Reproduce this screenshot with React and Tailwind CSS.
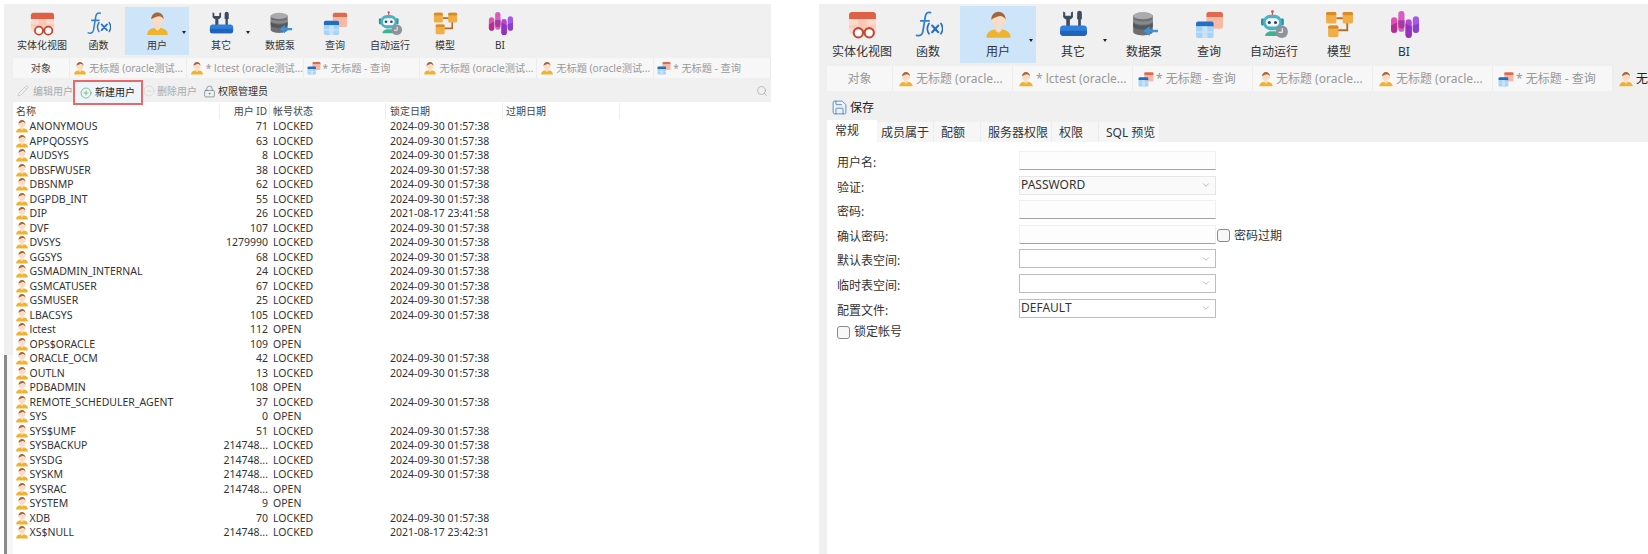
import React from "react";
import { ChevronDown, CircleMinus, CirclePlus, LockKeyhole, Pencil, Save, Search } from "lucide-react";

const UserIcon = ({ size = 24 }) => (
    <svg width={size} height={size} viewBox="0 0 24 24" className="shrink-0">
        <path d="M2 23c0-5 4-7 10-7s10 2 10 7z" fill="#efb32e" />
        <path d="M9.500 14h5v3l-2.500 2-2.500-2z" fill="#f9dcc6" />
        <circle cx="12" cy="8" r="6" fill="#f9dcc6" />
        <path d="M6 8c0-4 3-6.500 6-6.500S18 4 18 8c-1-2-3-3-4.500-3S9 6 6 8z" fill="#a5673a" />
    </svg>
);

const ViewIcon = ({ size }) => (
    <svg width={size} height={size} viewBox="0 0 28 28" className="shrink-0">
        <path d="M1 5a3 3 0 0 1 3-3h20a3 3 0 0 1 3 3v4H1z" fill="#dd6047" />
        <path d="M1 9h26v11a3 3 0 0 1-3 3H4a3 3 0 0 1-3-3z" fill="#fbd9cc" />
        <path d="M10 9h8v14h-8zM1 15h26v2H1z" fill="#f9c8b6" />
        <circle cx="10" cy="22" r="4.500" fill="#fff" stroke="#c9452f" strokeWidth="2" />
        <circle cx="20.500" cy="22" r="4.500" fill="#fff" stroke="#c9452f" strokeWidth="2" />
        <path d="M14 21h2.500" stroke="#c9452f" strokeWidth="2" />
    </svg>
);

const FuncIcon = ({ size }) => (
    <svg width={size} height={size} viewBox="0 0 28 28" className="shrink-0">
        <path d="M16 2.500c-3-.8-4.500.7-5 3.500L8.500 21c-.5 3-2.500 4.500-6 3.500M6.500 10.500h8" fill="none" stroke="#2f7fd3" strokeWidth="1.700" strokeLinecap="round" />
        <path d="M15.500 13c-2 3-2 7 0 10M27 13c2 3 2 7 0 10" transform="translate(-1 0)" fill="none" stroke="#2b6fc0" strokeWidth="1.600" strokeLinecap="round" />
        <path d="M17.500 15l6 6.500M23.500 15l-6 6.500" fill="none" stroke="#2b6fc0" strokeWidth="2" strokeLinecap="round" />
    </svg>
);

const OtherIcon = ({ size }) => (
    <svg width={size} height={size} viewBox="0 0 28 28" className="shrink-0">
        <path d="M7 6h3.500v10H7z" fill="#3f4c60" />
        <path d="M4 1.500v5.500l2 2h5.500l2-2V1.500l-2 1v3h-5.500v-3z" fill="#3f4c60" />
        <path d="M17.500 3a2.300 2.300 0 0 1 4.600 0v6h-1v7h-2.600V9h-1z" fill="#3f4c60" />
        <path d="M1 18c0-2 1.500-3 3-3h20c1.500 0 3 1 3 3v4c0 2-1.500 3-3 3H4c-1.500 0-3-1-3-3z" fill="#2f7fdc" />
        <path d="M1 20h26v2c0 2-1.500 3-3 3H4c-1.500 0-3-1-3-3z" fill="#1f63bb" />
    </svg>
);

const PumpIcon = ({ size }) => (
    <svg width={size} height={size} viewBox="0 0 28 28" className="shrink-0">
        <path d="M3 5h19v16c0 2-4 3.500-9.500 3.500S3 23 3 21z" fill="#6d6f73" />
        <path d="M3 12c1 2 5 3 9.500 3s8.500-1 9.500-3v4c-1 2-5 3-9.500 3S4 18 3 16z" fill="#55575b" />
        <ellipse cx="12.500" cy="5.500" rx="9.500" ry="3.500" fill="#a9abae" />
        <path d="M3 8c1 2 5 3 9.500 3s8.500-1 9.500-3v3c-1 2-5 3-9.500 3S4 13 3 11z" fill="#87898d" />
        <path d="M27 19v2.500h-8V25l-6-4.800 6-4.700V19z" fill="#3b92dd" />
    </svg>
);

const QueryIcon = ({ size }) => (
    <svg width={size} height={size} viewBox="0 0 28 28" className="shrink-0">
        <path d="M11 4a2 2 0 0 1 2-2h12a2 2 0 0 1 2 2v3H11z" fill="#df6a4f" />
        <path d="M11 7h16v9a2 2 0 0 1-2 2H11z" fill="#f7b9a4" />
        <path d="M1 13a2 2 0 0 1 2-2h13a2 2 0 0 1 2 2v3H1z" fill="#1f6fc9" />
        <path d="M1 16h17v9a2 2 0 0 1-2 2H3a2 2 0 0 1-2-2z" fill="#a6d3f7" />
        <path d="M7 16h5v11H7zM1 20.500h17v1.500H1z" fill="#c6e3fb" />
    </svg>
);

const RobotIcon = ({ size }) => (
    <svg width={size} height={size} viewBox="0 0 28 28" className="shrink-0">
        <path d="M12 1v4" stroke="#d0504a" strokeWidth="1.200" />
        <circle cx="12" cy="1.500" r="1.300" fill="#d0504a" />
        <rect x="1" y="8" width="3" height="7" rx="1.500" fill="#2f8f9f" />
        <rect x="20" y="8" width="3" height="7" rx="1.500" fill="#2f8f9f" />
        <rect x="3" y="4.500" width="18" height="15" rx="7" fill="#4db3c4" />
        <rect x="5.500" y="8" width="13" height="8" rx="4" fill="#f4f8fb" />
        <circle cx="9" cy="12" r="1.500" fill="#27456b" />
        <circle cx="15" cy="12" r="1.500" fill="#27456b" />
        <path d="M5 25c0-3 3-4.500 7-4.500s7 1.500 7 4.500z" fill="#3fb38f" />
        <circle cx="21" cy="21" r="6" fill="#8d949c" />
        <path d="M21.500 17.500V21.500H18" fill="none" stroke="#fff" strokeWidth="1" />
    </svg>
);

const ModelIcon = ({ size }) => (
    <svg width={size} height={size} viewBox="0 0 28 28" className="shrink-0">
        <path d="M11 8h8M21.500 12v7.500H11" fill="none" stroke="#b06f2c" strokeWidth="1.800" />
        <rect x="1" y="2" width="10" height="11" rx="1.500" fill="#f2ae46" />
        <rect x="1" y="2" width="10" height="3" rx="1.500" fill="#d98a2b" />
        <rect x="17" y="2" width="10" height="11" rx="1.500" fill="#f2ae46" />
        <rect x="17" y="2" width="10" height="3" rx="1.500" fill="#d98a2b" />
        <rect x="3" y="15" width="10" height="11" rx="1.500" fill="#f2ae46" />
        <rect x="3" y="15" width="10" height="3" rx="1.500" fill="#d98a2b" />
    </svg>
);

const BiIcon = ({ size }) => (
    <svg width={size} height={size} viewBox="0 0 28 28" className="shrink-0">
        <rect x="1" y="7" width="6" height="15" rx="3" fill="#e04fb3" />
        <path d="M1 15l6-3v7a3 3 0 0 1-6 0z" fill="#b02f8f" />
        <rect x="8" y="1" width="6" height="20" rx="3" fill="#d95cc0" />
        <path d="M8 10h6v5a3 3 0 0 1-6 0z" fill="#a83a9e" />
        <rect x="15" y="9" width="6" height="18" rx="3" fill="#b347d1" />
        <path d="M15 13l6 3v8a3 3 0 0 1-6 0z" fill="#9431c0" />
        <rect x="22" y="6" width="6" height="16" rx="3" fill="#a45ae6" />
        <path d="M22 15l6-2v6a3 3 0 0 1-6 0z" fill="#8a3fd0" />
    </svg>
);

const leftTools = [
    { label: "实体化视图", Icon: ViewIcon, w: "w-[60px]" },
    { label: "函数", Icon: FuncIcon, w: "w-[53px]" },
    { label: "用户", Icon: UserIcon, w: "w-[64px]", active: true, arrow: true },
    { label: "其它", Icon: OtherIcon, w: "w-[64px]", arrow: true },
    { label: "数据泵", Icon: PumpIcon, w: "w-[54px]" },
    { label: "查询", Icon: QueryIcon, w: "w-[56px]" },
    { label: "自动运行", Icon: RobotIcon, w: "w-[54px]" },
    { label: "模型", Icon: ModelIcon, w: "w-[56px]" },
    { label: "BI", Icon: BiIcon, w: "w-[54px]" },
];

const rightTools = [
    { label: "实体化视图", Icon: ViewIcon, w: "w-[68px]" },
    { label: "函数", Icon: FuncIcon, w: "w-[64px]" },
    { label: "用户", Icon: UserIcon, w: "w-[76px]", active: true, arrow: true },
    { label: "其它", Icon: OtherIcon, w: "w-[74px]", arrow: true },
    { label: "数据泵", Icon: PumpIcon, w: "w-[68px]" },
    { label: "查询", Icon: QueryIcon, w: "w-[62px]" },
    { label: "自动运行", Icon: RobotIcon, w: "w-[68px]" },
    { label: "模型", Icon: ModelIcon, w: "w-[62px]" },
    { label: "BI", Icon: BiIcon, w: "w-[68px]" },
];

const ToolItem = ({ tool, big }) => {
    const { label, Icon, w, active, arrow } = tool;
    return (
        <div className={`relative flex flex-col items-center shrink-0 ${w} ${big ? "h-[57px] pt-[4px]" : "h-[48px] pt-[4px]"} ${active ? "bg-[#cde4f9]" : ""}`}>
            <Icon size={big ? 29 : 25} />
            <span className={big ? "mt-[5px] text-[12px] leading-[16px] text-[#333]" : "mt-[1.500px] text-[10px] leading-[15px] text-[#333]"}>{label}</span>
            {/* little dropdown arrow next to the icon */}
            {arrow && (
                <span className={`absolute border-x-[2px] border-t-[3px] border-x-transparent border-t-[#222] ${big ? "right-[3px] top-[33px]" : "right-[3px] top-[24px]"}`} />
            )}
        </div>
    );
};

const users = [
    ["ANONYMOUS", "71", "LOCKED", "2024-09-30 01:57:38"],
    ["APPQOSSYS", "63", "LOCKED", "2024-09-30 01:57:38"],
    ["AUDSYS", "8", "LOCKED", "2024-09-30 01:57:38"],
    ["DBSFWUSER", "38", "LOCKED", "2024-09-30 01:57:38"],
    ["DBSNMP", "62", "LOCKED", "2024-09-30 01:57:38"],
    ["DGPDB_INT", "55", "LOCKED", "2024-09-30 01:57:38"],
    ["DIP", "26", "LOCKED", "2021-08-17 23:41:58"],
    ["DVF", "107", "LOCKED", "2024-09-30 01:57:38"],
    ["DVSYS", "1279990", "LOCKED", "2024-09-30 01:57:38"],
    ["GGSYS", "68", "LOCKED", "2024-09-30 01:57:38"],
    ["GSMADMIN_INTERNAL", "24", "LOCKED", "2024-09-30 01:57:38"],
    ["GSMCATUSER", "67", "LOCKED", "2024-09-30 01:57:38"],
    ["GSMUSER", "25", "LOCKED", "2024-09-30 01:57:38"],
    ["LBACSYS", "105", "LOCKED", "2024-09-30 01:57:38"],
    ["lctest", "112", "OPEN", ""],
    ["OPS$ORACLE", "109", "OPEN", ""],
    ["ORACLE_OCM", "42", "LOCKED", "2024-09-30 01:57:38"],
    ["OUTLN", "13", "LOCKED", "2024-09-30 01:57:38"],
    ["PDBADMIN", "108", "OPEN", ""],
    ["REMOTE_SCHEDULER_AGENT", "37", "LOCKED", "2024-09-30 01:57:38"],
    ["SYS", "0", "OPEN", ""],
    ["SYS$UMF", "51", "LOCKED", "2024-09-30 01:57:38"],
    ["SYSBACKUP", "214748...", "LOCKED", "2024-09-30 01:57:38"],
    ["SYSDG", "214748...", "LOCKED", "2024-09-30 01:57:38"],
    ["SYSKM", "214748...", "LOCKED", "2024-09-30 01:57:38"],
    ["SYSRAC", "214748...", "OPEN", ""],
    ["SYSTEM", "9", "OPEN", ""],
    ["XDB", "70", "LOCKED", "2024-09-30 01:57:38"],
    ["XS$NULL", "214748...", "LOCKED", "2021-08-17 23:42:31"],
];

const leftTabs = [
    { Icon: UserIcon, text: "无标题 (oracle测试..." },
    { Icon: UserIcon, text: "* lctest (oracle测试..." },
    { Icon: QueryIcon, text: "* 无标题 - 查询" },
    { Icon: UserIcon, text: "无标题 (oracle测试..." },
    { Icon: UserIcon, text: "无标题 (oracle测试..." },
    { Icon: QueryIcon, text: "* 无标题 - 查询" },
];

const rightTabs = [
    { Icon: UserIcon, text: "无标题 (oracle..." },
    { Icon: UserIcon, text: "* lctest (oracle..." },
    { Icon: QueryIcon, text: "* 无标题 - 查询" },
    { Icon: UserIcon, text: "无标题 (oracle..." },
    { Icon: UserIcon, text: "无标题 (oracle..." },
    { Icon: QueryIcon, text: "* 无标题 - 查询" },
];

const subTabs = [
    { label: "成员属于", w: "w-[57px] pl-[4px]" },
    { label: "配额", w: "w-[47px] pl-[7px]" },
    { label: "服务器权限", w: "w-[71px] pl-[7px]" },
    { label: "权限", w: "w-[47px] pl-[7px]" },
    { label: "SQL 预览", w: "w-[61px] pl-[7px]" },
];

const headCell = "border-r border-[#eeeeee] truncate";

const UserTable = () => (
    <div className="text-[10.500px] text-[#333]">
        <div className="grid grid-cols-[207px_50px_116px_117px_117px] h-[17px] leading-[17px] pt-[1px] text-[10px] text-[#444]">
            <div className={`${headCell} pl-[3px]`}>名称</div>
            <div className={`${headCell} text-right pr-[2px]`}>用户 ID</div>
            <div className={`${headCell} pl-[3px]`}>帐号状态</div>
            <div className={`${headCell} pl-[4px]`}>锁定日期</div>
            <div className={`${headCell} pl-[3px]`}>过期日期</div>
        </div>
        {users.map(([name, id, status, date]) => (
            <div key={name} className="grid grid-cols-[207px_50px_116px_117px_117px] h-[14.500px] leading-[14.500px]">
                <div className="flex items-center gap-[0.500px] pl-[2px]">
                    <UserIcon size={14} />
                    <span className="whitespace-nowrap">{name}</span>
                </div>
                <div className="text-right pr-[2px] whitespace-nowrap">{id}</div>
                <div className="pl-[3px]">{status}</div>
                <div className="pl-[4px] whitespace-nowrap">{date}</div>
                <div />
            </div>
        ))}
    </div>
);

const LeftPanel = () => (
    <div className="w-[767px] shrink-0 ml-[4px] mt-[4px] flex flex-col">
        <div className="flex h-[54px] bg-[#f0f0f0] pl-[8px] pt-[3px]">
            {leftTools.map((tool) => (
                <ToolItem key={tool.label} tool={tool} />
            ))}
        </div>
        <div className="flex flex-1">
            <div className="w-[9px] shrink-0 flex flex-col">
                <div className="h-[297px] bg-[#f0f0f0]" />
                <div className="flex-1 border-l-[3px] border-[#8a8a8a] bg-[#f6f6f6]" />
            </div>
            <div className="flex-1 min-w-0">
                <div className="flex h-[20px] bg-[#f7f7f7] text-[10.200px] leading-[20px] text-[#999]">
                    <div className="w-[57px] text-center text-[#444] border-r border-[#ececec]">对象</div>
                    {leftTabs.map((tab, i) => (
                        <div key={i} className="w-[117px] flex items-center gap-[2px] pl-[3px] border-r border-[#ececec] whitespace-nowrap overflow-hidden">
                            <tab.Icon size={14} />
                            <span>{tab.text}</span>
                        </div>
                    ))}
                </div>
                <div className="relative flex items-start h-[24px] bg-[#f0f0f0] text-[10px] text-[#aaa]">
                    <div className="flex items-center gap-[4px] w-[60px] h-[26px] pl-[4px]">
                        <Pencil size={12} strokeWidth={1.2} className="text-[#b5b5b5] shrink-0" />
                        <span className="whitespace-nowrap">编辑用户</span>
                    </div>
                    <div className="relative z-10 flex items-center gap-[3px] w-[70px] h-[25px] mt-[2px] pl-[5px] border-2 border-[#e86a68] bg-[#eef4f9] text-[#222]">
                        <CirclePlus size={12} strokeWidth={1.2} className="text-[#3fa34d] shrink-0" />
                        <span className="whitespace-nowrap">新建用户</span>
                    </div>
                    <div className="flex items-center gap-[2px] w-[60px] h-[26px]">
                        <CircleMinus size={12} strokeWidth={1} className="text-[#c5c5c5] shrink-0" />
                        <span className="whitespace-nowrap">删除用户</span>
                    </div>
                    <div className="flex items-center gap-[2px] h-[26px] text-[#333]">
                        <LockKeyhole size={13} strokeWidth={1.1} className="text-[#4a6a7a] shrink-0" />
                        <span className="whitespace-nowrap">权限管理员</span>
                    </div>
                    <Search size={12} strokeWidth={1.2} className="ml-auto mr-[3px] mt-[7px] text-[#999]" />
                </div>
                <UserTable />
            </div>
        </div>
    </div>
);

const Field = ({ label, children, after }) => (
    <div className="flex items-start h-[24.600px]">
        <span className="w-[182px] shrink-0 pt-[3px] text-[12px] leading-[18px] text-[#333]">{label}</span>
        <div className="w-[197px] shrink-0">{children}</div>
        {after}
    </div>
);

const TextBox = () => <div className="h-[19px] bg-[#fdfdfd] border border-[#f0f0f0] border-b-[#a3a3a3]" />;

const SelectBox = ({ value, strong }) => (
    <div className={`flex items-center justify-between h-[19px] pl-[1px] pr-[4px] text-[12px] text-[#333] border ${strong ? "bg-white border-[#bdbdbd]" : "bg-[#fafafa] border-[#e6e6e6]"}`}>
        <span>{value}</span>
        <ChevronDown size={10} strokeWidth={1.2} className="text-[#777]" />
    </div>
);

const CheckBox = () => <span className="inline-block w-[13px] h-[13px] shrink-0 rounded-[3px] border border-[#8a8a8a] bg-[#f8f8f8]" />;

const RightPanel = () => (
    <div className="flex-1 min-w-0 ml-[48px] mt-[4px] flex flex-col overflow-hidden">
        <div className="flex h-[62px] bg-[#f0f0f0] pl-[9px] pt-[2px]">
            {rightTools.map((tool) => (
                <ToolItem key={tool.label} tool={tool} big />
            ))}
        </div>
        <div className="flex flex-1">
            <div className="w-[8px] shrink-0 bg-[#f0f0f0]" />
            <div className="flex-1 min-w-0 overflow-hidden">
                <div className="flex h-[25px] bg-[#f7f7f7] text-[12px] leading-[25px] text-[#999] overflow-hidden">
                    <div className="w-[66px] shrink-0 text-center border-r border-[#ececec]">对象</div>
                    {rightTabs.map((tab, i) => (
                        <div key={i} className="w-[120px] shrink-0 flex items-center gap-[2px] pl-[5px] border-r border-[#ececec] whitespace-nowrap overflow-hidden">
                            <tab.Icon size={16} />
                            <span>{tab.text}</span>
                        </div>
                    ))}
                    {/* current tab, cut off by the edge of the window */}
                    <div className="w-[120px] shrink-0 flex items-center gap-[2px] pl-[5px] bg-[#f0f0f0] text-[#222] whitespace-nowrap">
                        <UserIcon size={16} />
                        <span>无标题 (oracle...</span>
                    </div>
                </div>
                <div className="bg-[#f0f0f0] h-[51px]">
                    <div className="flex items-center gap-[2px] h-[29px] pt-[4px] pl-[4px] text-[12px] text-[#222]">
                        <Save size={17} strokeWidth={1.2} className="text-[#3d82c4]" />
                        <span>保存</span>
                    </div>
                    <div className="flex items-end h-[22px] text-[12px] text-[#333]">
                        <div className="w-[50px] h-[22px] leading-[21px] pl-[8px] bg-white">常规</div>
                        {subTabs.map((t) => (
                            <div key={t.label} className={`${t.w} h-[20px] leading-[22px] bg-[#f6f6f6] border-r border-[#ececec] whitespace-nowrap`}>{t.label}</div>
                        ))}
                    </div>
                </div>
                <div className="pl-[10px] pt-[9px]">
                    <Field label="用户名:"><TextBox /></Field>
                    <Field label="验证:"><SelectBox value="PASSWORD" /></Field>
                    <Field label="密码:"><TextBox /></Field>
                    <Field
                        label="确认密码:"
                        after={
                            <label className="flex items-center gap-[4px] ml-[1px] mt-[2px] text-[12px] text-[#333] whitespace-nowrap">
                                <CheckBox />
                                密码过期
                            </label>
                        }
                    >
                        <TextBox />
                    </Field>
                    <Field label="默认表空间:"><SelectBox strong /></Field>
                    <Field label="临时表空间:"><SelectBox strong /></Field>
                    <Field label="配置文件:"><SelectBox value="DEFAULT" strong /></Field>
                    <label className="flex items-center gap-[4px] text-[12px] text-[#333]">
                        <CheckBox />
                        锁定帐号
                    </label>
                </div>
            </div>
        </div>
    </div>
);

export default function App() {
    return (
        <div className="flex w-[1648px] h-[554px] bg-white overflow-hidden font-['Noto_Sans','Noto_Sans_CJK_SC',sans-serif]">
            <LeftPanel />
            <RightPanel />
        </div>
    );
}
